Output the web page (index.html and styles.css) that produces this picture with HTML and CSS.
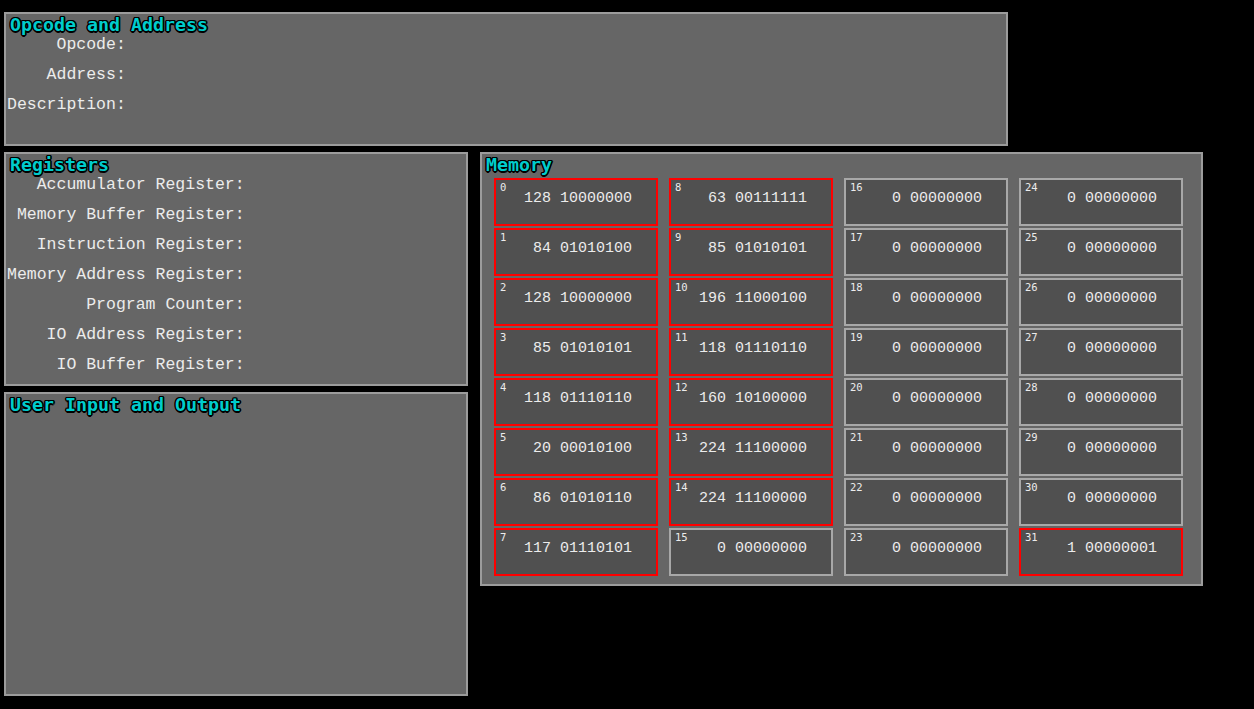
FILE: index.html
```html
<!DOCTYPE html>
<html>
<head>
<meta charset="utf-8">
<link rel="stylesheet" href="styles.css">
</head>
<body>
<div class="page">
  <section class="panel panel-op">
    <h2 class="title">Opcode and Address</h2>
    <div class="fields">
      <div class="label">Opcode:</div><div class="val"></div>
      <div class="label">Address:</div><div class="val"></div>
      <div class="label">Description:</div><div class="val"></div>
    </div>
  </section>
  <div class="lower">
    <div class="leftcol">
      <section class="panel panel-reg">
        <h2 class="title">Registers</h2>
        <div class="fields">
          <div class="label">Accumulator Register:</div><div class="val"></div>
          <div class="label">Memory Buffer Register:</div><div class="val"></div>
          <div class="label">Instruction Register:</div><div class="val"></div>
          <div class="label">Memory Address Register:</div><div class="val"></div>
          <div class="label">Program Counter:</div><div class="val"></div>
          <div class="label">IO Address Register:</div><div class="val"></div>
          <div class="label">IO Buffer Register:</div><div class="val"></div>
        </div>
      </section>
      <section class="panel panel-io">
        <h2 class="title">User Input and Output</h2>
      </section>
    </div>
    <section class="panel panel-mem">
      <h2 class="title">Memory</h2>
      <div class="grid">
        <div class="cell hot"><span class="idx">0</span><div class="v">128 10000000</div></div>
        <div class="cell hot"><span class="idx">1</span><div class="v">84 01010100</div></div>
        <div class="cell hot"><span class="idx">2</span><div class="v">128 10000000</div></div>
        <div class="cell hot"><span class="idx">3</span><div class="v">85 01010101</div></div>
        <div class="cell hot"><span class="idx">4</span><div class="v">118 01110110</div></div>
        <div class="cell hot"><span class="idx">5</span><div class="v">20 00010100</div></div>
        <div class="cell hot"><span class="idx">6</span><div class="v">86 01010110</div></div>
        <div class="cell hot"><span class="idx">7</span><div class="v">117 01110101</div></div>
        <div class="cell hot"><span class="idx">8</span><div class="v">63 00111111</div></div>
        <div class="cell hot"><span class="idx">9</span><div class="v">85 01010101</div></div>
        <div class="cell hot"><span class="idx">10</span><div class="v">196 11000100</div></div>
        <div class="cell hot"><span class="idx">11</span><div class="v">118 01110110</div></div>
        <div class="cell hot"><span class="idx">12</span><div class="v">160 10100000</div></div>
        <div class="cell hot"><span class="idx">13</span><div class="v">224 11100000</div></div>
        <div class="cell hot"><span class="idx">14</span><div class="v">224 11100000</div></div>
        <div class="cell"><span class="idx">15</span><div class="v">0 00000000</div></div>
        <div class="cell"><span class="idx">16</span><div class="v">0 00000000</div></div>
        <div class="cell"><span class="idx">17</span><div class="v">0 00000000</div></div>
        <div class="cell"><span class="idx">18</span><div class="v">0 00000000</div></div>
        <div class="cell"><span class="idx">19</span><div class="v">0 00000000</div></div>
        <div class="cell"><span class="idx">20</span><div class="v">0 00000000</div></div>
        <div class="cell"><span class="idx">21</span><div class="v">0 00000000</div></div>
        <div class="cell"><span class="idx">22</span><div class="v">0 00000000</div></div>
        <div class="cell"><span class="idx">23</span><div class="v">0 00000000</div></div>
        <div class="cell"><span class="idx">24</span><div class="v">0 00000000</div></div>
        <div class="cell"><span class="idx">25</span><div class="v">0 00000000</div></div>
        <div class="cell"><span class="idx">26</span><div class="v">0 00000000</div></div>
        <div class="cell"><span class="idx">27</span><div class="v">0 00000000</div></div>
        <div class="cell"><span class="idx">28</span><div class="v">0 00000000</div></div>
        <div class="cell"><span class="idx">29</span><div class="v">0 00000000</div></div>
        <div class="cell"><span class="idx">30</span><div class="v">0 00000000</div></div>
        <div class="cell hot"><span class="idx">31</span><div class="v">1 00000001</div></div>
      </div>
    </section>
  </div>
</div>
</body>
</html>
```
FILE: styles.css
```css
html, body {
  margin: 0;
  padding: 0;
  background: #000;
  width: 1254px;
  height: 709px;
  overflow: hidden;
}
.page {
  padding: 12px 0 0 4px;
  display: flex;
  flex-direction: column;
  gap: 6px;
  font-family: "Liberation Mono", "DejaVu Sans Mono", monospace;
  color: #ececec;
}
.panel {
  box-sizing: border-box;
  background: #666666;
  border: 2px solid #9c9c9c;
  padding: 1px 0 0 1px;
}
.panel-op { width: 1004px; height: 134px; }
.lower {
  display: flex;
  align-items: flex-start;
  gap: 12px;
}
.leftcol {
  display: flex;
  flex-direction: column;
  gap: 6px;
}
.panel-reg { width: 464px; height: 234px; }
.panel-io { width: 464px; height: 304px; }
.panel-mem { width: 723px; height: 434px; padding: 1px 18px 0 12px; }
.panel-mem .title { margin-left: -8px; }
.title {
  margin: 0 0 0 3px;
  height: 20px;
  line-height: 20px;
  font-family: "DejaVu Sans Mono", monospace;
  font-weight: bold;
  font-size: 18.3px;
  color: #00cccc;
  text-shadow:
    -1.5px 0 0 #000, 1.5px 0 0 #000, 0 -1.5px 0 #000, 0 1.5px 0 #000,
    -1px -1px 0 #000, 1px 1px 0 #000, -1px 1px 0 #000, 1px -1px 0 #000;
}
.fields {
  display: grid;
  grid-template-columns: max-content 1fr;
  row-gap: 10px;
}
.label {
  text-align: right;
  font-size: 16.5px;
  line-height: 20px;
  height: 20px;
  white-space: pre;
}
.grid {
  margin-top: 3px;
  display: grid;
  grid-template-columns: repeat(4, 164px);
  grid-template-rows: repeat(8, 48px);
  grid-auto-flow: column;
  column-gap: 11px;
  row-gap: 2px;
}
.cell {
  position: relative;
  box-sizing: border-box;
  background: #505050;
  border: 2px solid #a8a8a8;
}
.cell.hot { border-color: #ff0000; }
.idx {
  position: absolute;
  top: 1px;
  left: 4px;
  font-family: "DejaVu Sans Mono", monospace;
  font-size: 10.5px;
  line-height: 12px;
}
.v {
  padding: 11px 24px 0 0;
  text-align: right;
  font-size: 15px;
  line-height: 16px;
  white-space: pre;
}
```
